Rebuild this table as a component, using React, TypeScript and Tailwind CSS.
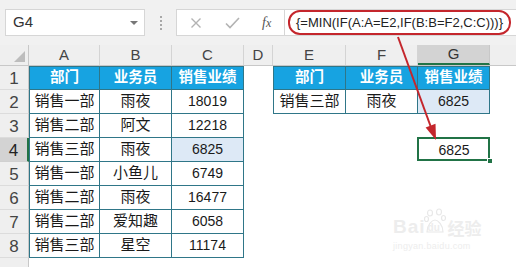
import React from "react";

const left = [
  ["销售一部", "雨夜", "18019"],
  ["销售二部", "阿文", "12218"],
  ["销售三部", "雨夜", "6825"],
  ["销售一部", "小鱼儿", "6749"],
  ["销售二部", "雨夜", "16477"],
  ["销售二部", "爱知趣", "6058"],
  ["销售三部", "星空", "11174"],
];
const head = ["部门", "业务员", "销售业绩"];

const tb = "border-r border-b border-[#2f7688]";
const hdr = "bg-[#17a3e1] text-white font-bold text-[14.5px]";
const body = "text-[#1a1a1a] text-[15px]";
const cellBase = "h-full shrink-0 flex items-center justify-center";

function RowHead({ n, sel }: { n: number; sel?: boolean }) {
  return (
    <div
      className={
        sel
          ? "h-full w-[29px] shrink-0 flex items-center justify-center bg-[#d3d3d3] border-r-2 border-r-[#217346] border-b border-b-[#d0d0d0] text-[#222] text-[17px]"
          : "h-full w-[29px] shrink-0 flex items-center justify-center bg-[#efefef] border-r border-r-[#c8c8c8] border-b border-b-[#dcdcdc] text-[#444] text-[17px]"
      }
    >
      <span className="pt-[3px]">{n}</span>
    </div>
  );
}

export default function App() {
  const rows = [];
  for (let i = 0; i < 8; i++) {
    const r = i + 1;
    const isHead = r === 1;
    const ld = isHead ? head : left[i - 1];
    const rd = r === 1 ? head : r === 2 ? ["销售三部", "雨夜", "6825"] : null;
    rows.push(
      <div key={r} className="flex h-[24px]">
        <RowHead n={r} sel={r === 4} />
        <div className={`${cellBase} w-[71px] border-l border-l-[#2f7688] ${tb} ${isHead ? hdr + " border-t border-t-[#2f7688]" : body}`}>{ld[0]}</div>
        <div className={`${cellBase} w-[72px] ${tb} ${isHead ? hdr + " border-t border-t-[#2f7688]" : body}`}>{ld[1]}</div>
        <div
          className={`${cellBase} w-[72px] ${tb} ${isHead ? hdr + " border-t border-t-[#2f7688]" : body} ${r === 4 ? "bg-[#dde9f6]" : ""} font-['Liberation_Sans','Noto_Sans_CJK_SC',sans-serif]`}
        >
          <span className={isHead ? "" : "text-[14px]"}>{ld[2]}</span>
        </div>
        <div className={`${cellBase} w-[29px]`} />
        {rd ? (
          <>
            <div className={`${cellBase} w-[73px] border-l border-l-[#2f7688] ${tb} ${isHead ? hdr + " border-t border-t-[#2f7688]" : body}`}>{rd[0]}</div>
            <div className={`${cellBase} w-[72px] ${tb} ${isHead ? hdr + " border-t border-t-[#2f7688]" : body}`}>{rd[1]}</div>
            <div className={`${cellBase} w-[72px] ${tb} ${isHead ? hdr + " border-t border-t-[#2f7688]" : body + " bg-[#dde9f6]"}`}>
              <span className={isHead ? "" : "text-[14px]"}>{rd[2]}</span>
            </div>
          </>
        ) : (
          <>
            <div className={`${cellBase} w-[73px]`} />
            <div className={`${cellBase} w-[72px]`} />
            <div className={`${cellBase} w-[72px] relative ${body}`}>
              {r === 4 && (
                <>
                  <span className="text-[14px]">6825</span>
                  <div className="absolute -left-[1px] -top-[1px] right-0 bottom-[1px] border-2 border-[#217346]" />
                  <div className="absolute -right-[3px] bottom-[-2px] w-[6px] h-[6px] bg-[#217346] border border-white" />
                </>
              )}
            </div>
          </>
        )}
        <div className="flex-1" />
      </div>
    );
  }

  const cols = [
    { l: "A", w: "w-[71px]" },
    { l: "B", w: "w-[72px]" },
    { l: "C", w: "w-[72px]" },
    { l: "D", w: "w-[29px]" },
    { l: "E", w: "w-[73px]" },
    { l: "F", w: "w-[72px]" },
    { l: "G", w: "w-[72px]" },
  ];

  return (
    <div className="relative w-[516px] h-[267px] overflow-hidden bg-white font-['Liberation_Sans','Noto_Sans_CJK_SC',sans-serif]">
      {/* toolbar */}
      <div className="flex items-center h-[45px] bg-[#f1f1f1] pl-[5px]">
        <div className="flex items-center justify-between w-[140px] h-[27px] bg-white border border-[#d6d6d6] pl-[7px] pr-[6px]">
          <span className="text-[15px] text-[#333]">G4</span>
          <div className="w-0 h-0 border-x-[4px] border-x-transparent border-t-[4px] border-t-[#777]" />
        </div>
        <div className="w-[31px] flex flex-col items-center gap-[2px]">
          <div className="w-[2px] h-[2px] bg-[#a8a8a8]" />
          <div className="w-[2px] h-[2px] bg-[#a8a8a8]" />
          <div className="w-[2px] h-[2px] bg-[#a8a8a8]" />
          <div className="w-[2px] h-[2px] bg-[#a8a8a8]" />
        </div>
        <div className="flex items-center w-[109px] h-[27px] bg-white border border-[#d6d6d6]">
          <svg width="12" height="12" viewBox="0 0 12 12" className="ml-[13px]">
            <path d="M1.5 1.5 L10.5 10.5 M10.5 1.5 L1.5 10.5" stroke="#b3b3b3" strokeWidth="1.4" />
          </svg>
          <svg width="15" height="12" viewBox="0 0 15 12" className="ml-[23px]">
            <path d="M1 6.5 L5 10.5 L14 1" stroke="#b3b3b3" strokeWidth="1.6" fill="none" />
          </svg>
          <span className="ml-[22px] italic text-[14px] text-[#555] font-['Liberation_Serif',serif]">
            f<span className="text-[12px]">x</span>
          </span>
        </div>
        <div className="flex items-center w-[231px] h-[27px] bg-white border-y border-y-[#d6d6d6]">
          <div className="ml-[3px] w-[223px] h-[25px] border-2 border-[#c4262c] rounded-[12px] flex items-center justify-center">
            <span className="text-[13px] text-[#222]">{"{=MIN(IF(A:A=E2,IF(B:B=F2,C:C)))}"}</span>
          </div>
        </div>
      </div>

      {/* column headers */}
      <div className="flex h-[21px] bg-[#efefef] border-b border-b-[#c8c8c8]">
        <div className="w-[29px] h-full shrink-0 border-r border-r-[#c8c8c8] relative">
          <div className="absolute right-[3px] bottom-[3px] w-0 h-0 border-l-[11px] border-l-transparent border-b-[11px] border-b-[#bdbdbd]" />
        </div>
        {cols.map((c) =>
          c.l === "G" ? (
            <div key={c.l} className={`${c.w} h-full shrink-0 flex items-center justify-center bg-[#d3d3d3] border-r border-r-[#c8c8c8] border-b-2 border-b-[#217346] text-[15px] text-[#333]`}>
              {c.l}
            </div>
          ) : (
            <div key={c.l} className={`${c.w} h-full shrink-0 flex items-center justify-center border-r border-r-[#d4d4d4] text-[15px] text-[#444]`}>
              {c.l}
            </div>
          )
        )}
        <div className="flex-1" />
      </div>

      {rows}

      <div className="flex h-[10px]">
        <div className="w-[29px] h-full bg-[#efefef] border-r border-r-[#c8c8c8]" />
      </div>

      {/* arrow annotation */}
      <svg className="absolute left-0 top-0 pointer-events-none" width="516" height="267">
        <line x1="398" y1="37" x2="430.5" y2="126" stroke="#c4262c" strokeWidth="2" />
        <polygon points="436,140 435.5,123.8 425.6,127.5" fill="#c4262c" />
      </svg>

      {/* watermark */}
      <div className="absolute left-[393px] top-[208px] flex flex-col items-start text-[#ededed] pointer-events-none">
        <div className="flex items-end">
          <span className="text-[19px] font-bold leading-none tracking-[1px]">Bai</span>
          <div className="relative w-[22px] h-[28px] -ml-[2px]">
            <svg width="22" height="28" viewBox="0 0 22 28" className="absolute left-0 top-0">
              <ellipse cx="6" cy="5" rx="2.5" ry="3" fill="none" stroke="#e8e8e8" strokeWidth="1.2" />
              <ellipse cx="15" cy="4" rx="2.5" ry="3" fill="none" stroke="#e8e8e8" strokeWidth="1.2" />
              <ellipse cx="2.5" cy="11" rx="2" ry="2.5" fill="none" stroke="#e8e8e8" strokeWidth="1.2" />
              <ellipse cx="19.5" cy="10" rx="2" ry="2.5" fill="none" stroke="#e8e8e8" strokeWidth="1.2" />
              <path d="M3 24 C3 17 8 12 11 12 C14 12 19 17 19 24 Z" fill="none" stroke="#e8e8e8" strokeWidth="1.2" />
            </svg>
            <span className="absolute left-[4px] bottom-[3px] text-[10px] font-bold leading-none">du</span>
          </div>
          <span className="text-[17px] font-bold leading-none ml-[2px] font-['Noto_Sans_CJK_SC',sans-serif]">经验</span>
        </div>
        <span className="text-[9px] leading-none mt-[6px] tracking-[0.3px]">jingyan.baidu.com</span>
      </div>
    </div>
  );
}
